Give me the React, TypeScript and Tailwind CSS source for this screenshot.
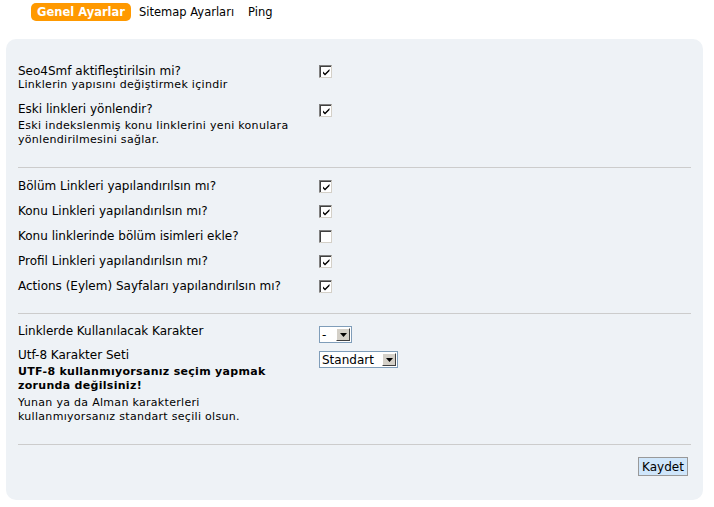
import type { ReactNode } from "react";

const font = { fontFamily: '"DejaVu Sans", Verdana, sans-serif' };

function Check({ on }: { on: boolean }) {
  return (
    <span className="flex h-[13px] w-[13px] items-center justify-center border border-t-[#808080] border-l-[#808080] border-b-[#d4d0c8] border-r-[#d4d0c8] bg-white shadow-[inset_1px_1px_0_#404040]">
      {on && (
        <svg width="9" height="9" viewBox="0 0 9 9" className="ml-[1px] mt-[1px]">
          <path d="M1 3.5 L3 5.5 L7.5 1 L7.5 3 L3 7.5 L1 5.5 Z" fill="#000" />
        </svg>
      )}
    </span>
  );
}

function Select({ value, w }: { value: string; w: string }) {
  return (
    <span className={`flex h-[17px] shrink-0 items-center border border-[#7f9db9] bg-white ${w}`}>
      <span className="flex-1 pl-[2px] text-[12px] leading-none">{value}</span>
      <span className="m-[1px] flex h-[13px] w-[14px] items-center justify-center border border-t-white border-l-white border-b-[#404040] border-r-[#404040] bg-[#d4d0c8]">
        <svg width="7" height="4" viewBox="0 0 7 4">
          <path d="M0 0 H7 L3.5 4 Z" fill="#000" />
        </svg>
      </span>
    </span>
  );
}

function Row({ label, children, top = "pt-[1px]" }: { label: ReactNode; children: ReactNode; top?: string }) {
  return (
    <div className="flex">
      <div className="w-[300px] shrink-0">{label}</div>
      <div className={`flex h-[14px] items-start pl-[1px] leading-none ${top}`}>{children}</div>
    </div>
  );
}

const main = "text-[12px] leading-[14px]";
const sub = "text-[11px] leading-[14px] tracking-[0.3px]";

export default function App() {
  const mid = [
    ["Bölüm Linkleri yapılandırılsın mı?", true],
    ["Konu Linkleri yapılandırılsın mı?", true],
    ["Konu linklerinde bölüm isimleri ekle?", false],
    ["Profil Linkleri yapılandırılsın mı?", true],
    ["Actions (Eylem) Sayfaları yapılandırılsın mı?", true],
  ] as const;

  return (
    <div className="min-h-[507px] w-[714px] bg-white pt-[3px] text-black" style={font}>
      <div className="flex h-[18px] items-center pl-[31px] text-[11.5px] leading-[14px]">
        <span className="flex h-[18px] items-center rounded-[5px] bg-[#ff9900] px-[6px] font-bold text-white">
          Genel Ayarlar
        </span>
        <span className="ml-[8px]">Sitemap Ayarları</span>
        <span className="ml-[14px]">Ping</span>
      </div>

      <div className="ml-[6px] mt-[18px] w-[697px] rounded-[10px] bg-[#eef2f6] pb-[24px] pl-[12px] pr-[12px] pt-[25px]">
        <div className="flex flex-col gap-[10px]">
          <Row
            label={
              <>
                <div className={main}>Seo4Smf aktifleştirilsin mi?</div>
                <div className={sub}>Linklerin yapısını değiştirmek içindir</div>
              </>
            }
          >
            <Check on />
          </Row>
          <Row
            top="pt-[2px]"
            label={
              <>
                <div className={main}>Eski linkleri yönlendir?</div>
                <div className={`mt-[3px] ${sub}`}>
                  Eski indekslenmiş konu linklerini yeni konulara
                  <br />
                  yönlendirilmesini sağlar.
                </div>
              </>
            }
          >
            <Check on />
          </Row>
        </div>

        <hr className="mb-[11px] mt-[20px] border-[#cccccc]" />

        <div className="flex flex-col gap-[11px]">
          {mid.map(([l, on]) => (
            <Row key={l} label={<div className={main}>{l}</div>}>
              <Check on={on} />
            </Row>
          ))}
        </div>

        <hr className="mb-[10px] mt-[20px] border-[#cccccc]" />

        <div className="flex flex-col gap-[10px]">
          <Row top="pt-[2px]" label={<div className={main}>Linklerde Kullanılacak Karakter</div>}>
            <Select value="-" w="w-[33px]" />
          </Row>
          <Row
            top="pt-[3px]"
            label={
              <>
                <div className={main}>Utf-8 Karakter Seti</div>
                <div className={`mt-[3px] font-bold ${sub}`}>
                  UTF-8 kullanmıyorsanız seçim yapmak
                  <br />
                  zorunda değilsiniz!
                </div>
                <div className={`mt-[3px] ${sub}`}>
                  Yunan ya da Alman karakterleri
                  <br />
                  kullanmıyorsanız standart seçili olsun.
                </div>
              </>
            }
          >
            <Select value="Standart" w="w-[79px]" />
          </Row>
        </div>

        <hr className="mb-[12px] mt-[20px] border-[#cccccc]" />

        <div className="flex justify-end pr-[3px]">
          <button className="h-[19px] w-[50px] border border-[#999999] bg-[#cfe6fb] text-[12px] leading-none">
            Kaydet
          </button>
        </div>
      </div>
    </div>
  );
}
